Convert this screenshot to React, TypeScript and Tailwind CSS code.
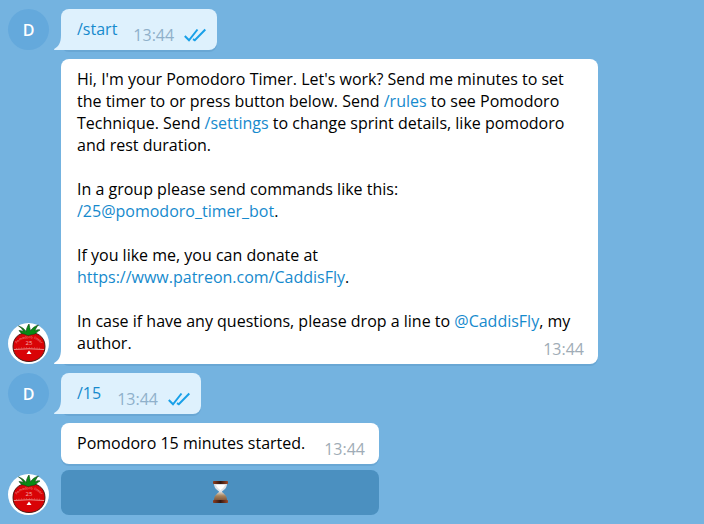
import type { ReactNode } from "react";

function UserAvatar() {
  return (
    <div className="flex size-[41px] shrink-0 items-center justify-center rounded-full bg-[#64a9dc] text-base font-semibold text-white">
      D
    </div>
  );
}

function BotAvatar() {
  return (
    <svg viewBox="0 0 41 41" className="size-[41px] shrink-0" role="img" aria-label="Pomodoro Timer">
      <circle cx="20.500" cy="20.500" r="20.500" fill="#fff" />
      <path
        d="M21 10.500C28 8.500 37 13 37 23.500C37 33 29.500 38.500 21 38.500S5 33 5 23.500C5 13 14 8.500 21 10.500Z"
        fill="#d90306"
        stroke="#4b1712"
        strokeWidth="1"
      />
      <path
        d="M10.500 3C14 4 16.500 6 18 8.500C18.500 5.500 19.500 3 21 1C21.500 3.500 22 5.500 22.500 8C24 5 27 3 30.500 2C28.500 4 27.500 6 27 8C29 6.500 30.500 6.500 32 7C29 8.500 28 11.500 24.500 11.500C22.500 11.500 21.500 12.500 20.500 12.500C18.500 12.500 17.500 11 15.500 11C13.500 11 12 9 11 7.500C12.500 7.500 14 8 15.500 8.500C14.500 6.500 13 4.500 10.500 3Z"
        fill="#098a14"
        stroke="#153f17"
        strokeWidth="0.600"
      />
      <path id="tomato-arc" d="M8 22C13 13 29 13 34 22" fill="none" />
      <text fontSize="3.500" fill="#f3aaa3" textAnchor="middle">
        <textPath href="#tomato-arc" startOffset="50%">
          Pomodoro Timer
        </textPath>
      </text>
      <text x="21" y="22" fontSize="6" fill="#f5b5af" textAnchor="middle">
        25
      </text>
      <path d="M6 26.500Q21 25 36 26.500" fill="none" stroke="#efb0aa" strokeWidth="0.800" />
      <path d="M8 25.500Q21 24 34 25.500" fill="none" stroke="#e58d86" strokeWidth="1" strokeDasharray="0.600 2" />
      <path d="M21 27.500L23.500 31H18.500Z" fill="#fff" />
    </svg>
  );
}

function Tail({ className }: { className: string }) {
  return (
    <svg viewBox="0 0 15 15" className={`absolute bottom-0 -left-[7px] size-[15px] ${className}`} aria-hidden="true">
      <path d="M7 0C7 8 4.500 11.500 0.500 13.800C-0.200 14.300 0 15 1 15H15V0Z" fill="currentColor" />
    </svg>
  );
}

function Checks() {
  return (
    <svg viewBox="0 0 22 14" className="h-[14px] w-[22px]" role="img" aria-label="Read">
      <path
        d="M0.800 8L5 12.300L13.500 1.500M9 11.200L10.800 12.300L21.300 1.500"
        fill="none"
        stroke="#18a0e8"
        strokeWidth="2"
      />
    </svg>
  );
}

function Hourglass() {
  return (
    <svg viewBox="0 0 15 22" className="h-[22px] w-[15px]" aria-hidden="true">
      <defs>
        <linearGradient id="wood">
          <stop offset="0" stopColor="#8d3e20" />
          <stop offset="0.500" stopColor="#321711" />
          <stop offset="1" stopColor="#9b4828" />
        </linearGradient>
        <linearGradient id="sand" x2="0" y2="1">
          <stop offset="0" stopColor="#ded8d2" />
          <stop offset="0.450" stopColor="#a5835c" />
          <stop offset="1" stopColor="#7d5137" />
        </linearGradient>
      </defs>
      <path d="M1 2.500H14C14 7 11.500 8.500 9 10.500V12H6V10.500C3.500 8.500 1 7 1 2.500Z" fill="#dde2e8" />
      <path d="M3 4H12C11 6.500 9 8 7.500 9.500C6 8 4 6.500 3 4Z" fill="#fff" />
      <path d="M6 11H9C11.500 13 14 15 14 19.500H1C1 15 3.500 13 6 11Z" fill="url(#sand)" />
      <rect y="0" width="15" height="3" rx="0.800" fill="url(#wood)" />
      <rect y="19" width="15" height="3" rx="0.800" fill="url(#wood)" />
    </svg>
  );
}

function Command({ children }: { children: ReactNode }) {
  return (
    <a href="#" className="text-[#168acd]">
      {children}
    </a>
  );
}

function OwnMessage({ text }: { text: string }) {
  return (
    <div className="flex items-end gap-3">
      <UserAvatar />
      <div className="relative flex items-end rounded-lg bg-[#def1fd] pt-[9px] pr-[11px] pb-1 pl-4 shadow-[0_2px_0_#69a7d4]">
        <Tail className="text-[#def1fd]" />
        <p className="pb-[6px]">
          <Command>{text}</Command>
        </p>
        <time className="ml-4 text-[#8fb0ca]">13:44</time>
        <span className="ml-[10px] flex h-[22px] items-center">
          <Checks />
        </span>
      </div>
    </div>
  );
}

export default function App() {
  return (
    <main className="flex min-h-screen flex-col gap-[9px] bg-[#74b3e0] px-2 py-[9px] font-['Open_Sans','Noto_Sans',sans-serif] text-base leading-[22px] text-black">
      <OwnMessage text="/start" />

      <div className="flex items-end gap-3">
        <BotAvatar />
        <div className="relative max-w-[537px] rounded-lg bg-white px-4 pt-[9px] pb-[10px] shadow-[0_2px_0_#69a7d4]">
          <Tail className="text-white" />
          <div className="flex flex-col gap-[22px]">
            <p>
              Hi, I'm your Pomodoro Timer. Let's work? Send me minutes to set the timer to or press
              button below. Send <Command>/rules</Command> to see Pomodoro Technique. Send{" "}
              <Command>/settings</Command> to change sprint details, like pomodoro and rest duration.
            </p>
            <p>
              In a group please send commands like this:
              <br />
              <Command>/25@pomodoro_timer_bot</Command>.
            </p>
            <p>
              If you like me, you can donate at
              <br />
              <Command>https://www.patreon.com/CaddisFly</Command>.
            </p>
            <p>
              In case if have any questions, please drop a line to <Command>@CaddisFly</Command>, my
              author.
            </p>
          </div>
          <time className="absolute right-[14px] bottom-1 text-[#a0acb6]">13:44</time>
        </div>
      </div>

      <OwnMessage text="/15" />

      <div className="flex items-end gap-3">
        <BotAvatar />
        <div className="flex min-w-[318px] flex-col gap-[6px]">
          <div className="flex items-end justify-between gap-4 rounded-lg bg-white pt-[9px] pr-[14px] pb-1 pl-4 shadow-[0_2px_0_#69a7d4]">
            <p className="pb-[6px]">Pomodoro 15 minutes started.</p>
            <time className="text-[#a0acb6]">13:44</time>
          </div>
          <button
            type="button"
            aria-label="Timer running"
            className="flex h-[45px] items-center justify-center rounded-lg bg-[#4b90c0] pb-[2px]"
          >
            <Hourglass />
          </button>
        </div>
      </div>
    </main>
  );
}
